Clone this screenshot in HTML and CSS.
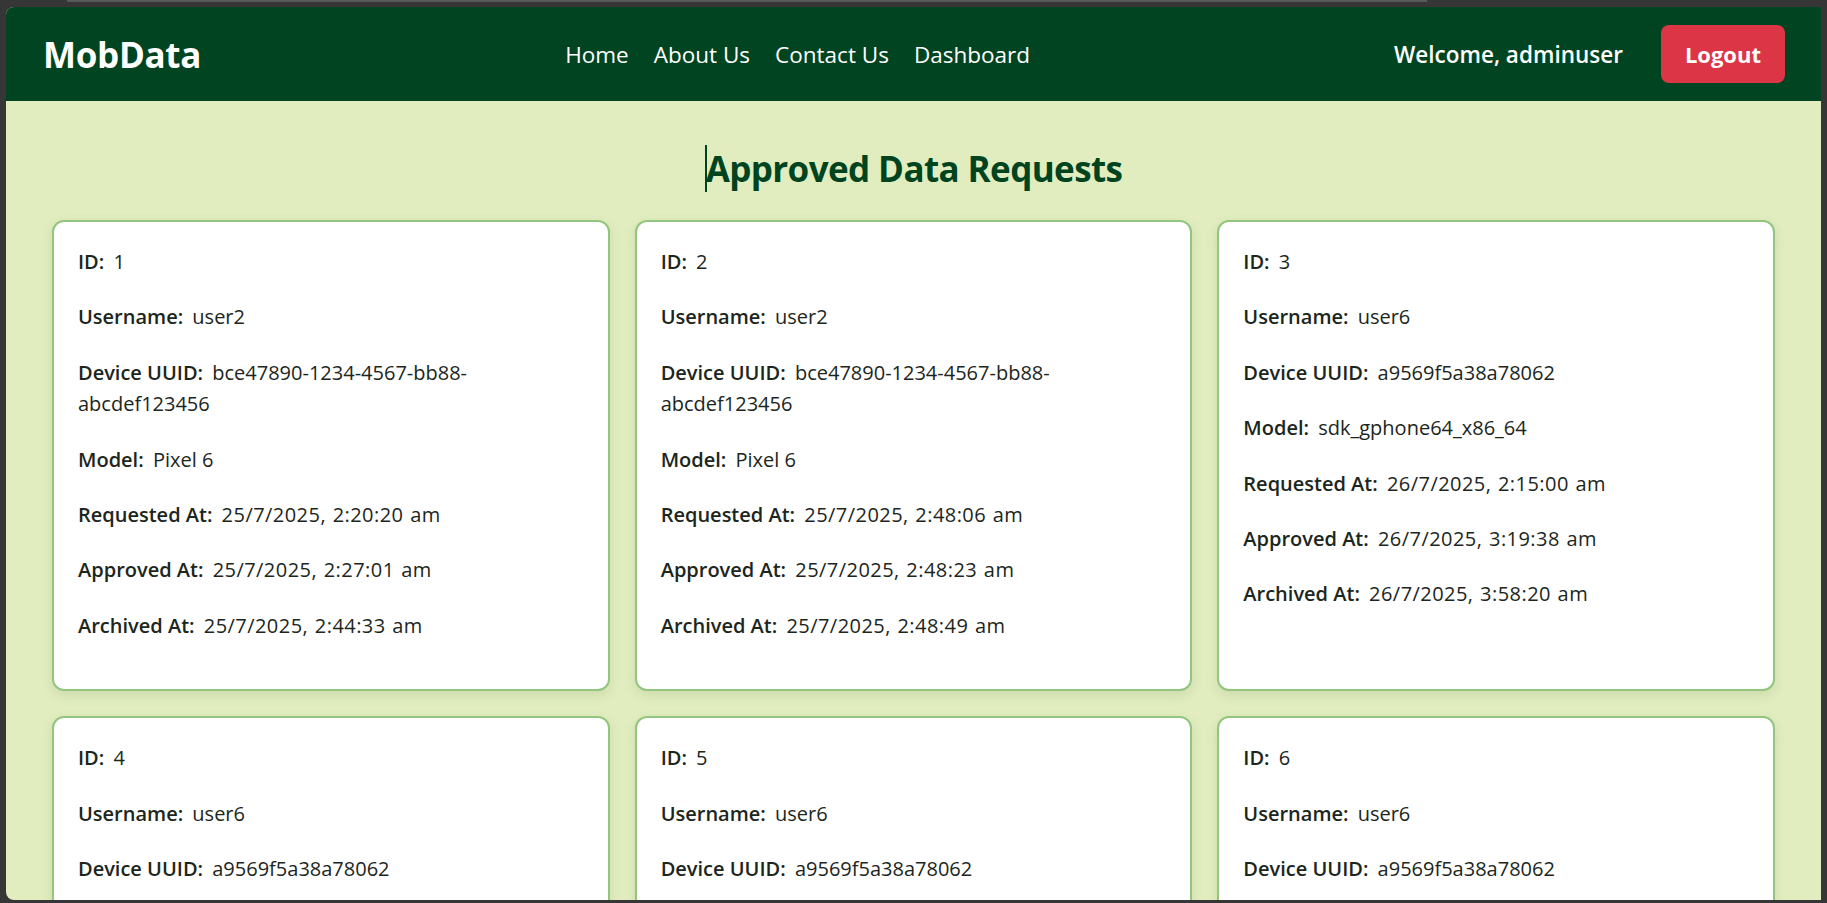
FILE: index.html
```html
<!DOCTYPE html>
<html lang="en">
<head>
<meta charset="utf-8">
<title>MobData - Approved Data Requests</title>
<link rel="stylesheet" href="styles.css">
</head>
<body>
<div class="chrome-line"></div>
<div class="window">
  <nav class="navbar">
    <div class="logo">MobData</div>
    <ul class="links">
      <li>Home</li>
      <li>About Us</li>
      <li>Contact Us</li>
      <li>Dashboard</li>
    </ul>
    <div class="user">
      <span class="welcome">Welcome, adminuser</span>
      <button class="logout">Logout</button>
    </div>
  </nav>
  <main class="content">
    <h1 class="title"><span class="caret"></span>Approved Data Requests</h1>
    <div class="grid">
      <div class="card">
        <p><strong>ID:</strong> <span class="val">1</span></p>
        <p><strong>Username:</strong> <span class="val">user2</span></p>
        <p><strong>Device UUID:</strong> <span class="val">bce47890-1234-4567-bb88-abcdef123456</span></p>
        <p><strong>Model:</strong> <span class="val">Pixel 6</span></p>
        <p><strong>Requested At:</strong> <span class="val date">25/7/2025, 2:20:20 am</span></p>
        <p><strong>Approved At:</strong> <span class="val date">25/7/2025, 2:27:01 am</span></p>
        <p><strong>Archived At:</strong> <span class="val date">25/7/2025, 2:44:33 am</span></p>
      </div>
      <div class="card">
        <p><strong>ID:</strong> <span class="val">2</span></p>
        <p><strong>Username:</strong> <span class="val">user2</span></p>
        <p><strong>Device UUID:</strong> <span class="val">bce47890-1234-4567-bb88-abcdef123456</span></p>
        <p><strong>Model:</strong> <span class="val">Pixel 6</span></p>
        <p><strong>Requested At:</strong> <span class="val date">25/7/2025, 2:48:06 am</span></p>
        <p><strong>Approved At:</strong> <span class="val date">25/7/2025, 2:48:23 am</span></p>
        <p><strong>Archived At:</strong> <span class="val date">25/7/2025, 2:48:49 am</span></p>
      </div>
      <div class="card">
        <p><strong>ID:</strong> <span class="val">3</span></p>
        <p><strong>Username:</strong> <span class="val">user6</span></p>
        <p><strong>Device UUID:</strong> <span class="val">a9569f5a38a78062</span></p>
        <p><strong>Model:</strong> <span class="val">sdk_gphone64_x86_64</span></p>
        <p><strong>Requested At:</strong> <span class="val date">26/7/2025, 2:15:00 am</span></p>
        <p><strong>Approved At:</strong> <span class="val date">26/7/2025, 3:19:38 am</span></p>
        <p><strong>Archived At:</strong> <span class="val date">26/7/2025, 3:58:20 am</span></p>
      </div>
      <div class="card">
        <p><strong>ID:</strong> <span class="val">4</span></p>
        <p><strong>Username:</strong> <span class="val">user6</span></p>
        <p><strong>Device UUID:</strong> <span class="val">a9569f5a38a78062</span></p>
        <p><strong>Model:</strong> <span class="val">sdk_gphone64_x86_64</span></p>
        <p><strong>Requested At:</strong> <span class="val date">26/7/2025, 4:02:11 am</span></p>
        <p><strong>Approved At:</strong> <span class="val date">26/7/2025, 4:05:40 am</span></p>
        <p><strong>Archived At:</strong> <span class="val date">26/7/2025, 4:30:02 am</span></p>
      </div>
      <div class="card">
        <p><strong>ID:</strong> <span class="val">5</span></p>
        <p><strong>Username:</strong> <span class="val">user6</span></p>
        <p><strong>Device UUID:</strong> <span class="val">a9569f5a38a78062</span></p>
        <p><strong>Model:</strong> <span class="val">sdk_gphone64_x86_64</span></p>
        <p><strong>Requested At:</strong> <span class="val date">26/7/2025, 4:40:18 am</span></p>
        <p><strong>Approved At:</strong> <span class="val date">26/7/2025, 4:41:05 am</span></p>
        <p><strong>Archived At:</strong> <span class="val date">26/7/2025, 4:52:47 am</span></p>
      </div>
      <div class="card">
        <p><strong>ID:</strong> <span class="val">6</span></p>
        <p><strong>Username:</strong> <span class="val">user6</span></p>
        <p><strong>Device UUID:</strong> <span class="val">a9569f5a38a78062</span></p>
        <p><strong>Model:</strong> <span class="val">sdk_gphone64_x86_64</span></p>
        <p><strong>Requested At:</strong> <span class="val date">26/7/2025, 5:10:33 am</span></p>
        <p><strong>Approved At:</strong> <span class="val date">26/7/2025, 5:12:09 am</span></p>
        <p><strong>Archived At:</strong> <span class="val date">26/7/2025, 5:20:56 am</span></p>
      </div>
    </div>
  </main>
</div>
</body>
</html>
```
FILE: styles.css
```css
html, body {
  margin: 0;
  padding: 0;
  height: 100%;
}

body {
  background: #363636;
  overflow: hidden;
  font-family: "Open Sans", "Noto Sans", "Liberation Sans", sans-serif;
  position: relative;
}

.chrome-line {
  position: absolute;
  top: 0;
  left: 67px;
  width: 1360px;
  height: 2px;
  background: #595959;
}

.window {
  margin: 7px 6px 0 6px;
  height: 893px;
  border-radius: 8px 0 0 8px;
  overflow: hidden;
  background: #e1edbf;
}

.navbar {
  height: 94px;
  box-sizing: border-box;
  background: #014421;
  display: flex;
  align-items: center;
  justify-content: space-between;
  padding: 0 36px 0 37px;
  color: #ffffff;
}

.logo {
  font-size: 35px;
  font-weight: 700;
  letter-spacing: -0.3px;
}

.links {
  list-style: none;
  margin: 0;
  padding: 0;
  display: flex;
  gap: 25px;
  font-size: 22.5px;
}

.user {
  display: flex;
  align-items: center;
  gap: 38px;
}

.welcome {
  font-size: 22.5px;
  font-weight: 600;
}

.logout {
  font-family: inherit;
  font-size: 22px;
  font-weight: 700;
  color: #ffffff;
  background: #dc3545;
  border: none;
  border-radius: 8px;
  height: 58px;
  padding: 0 24px;
}

.content {
  padding: 44px 46px 0 46px;
}

.title {
  margin: 0 0 28px 0;
  text-align: center;
  font-size: 35px;
  line-height: 47px;
  font-weight: 700;
  letter-spacing: -0.6px;
  color: #00441f;
}

.caret {
  display: inline-block;
  width: 2px;
  height: 47px;
  background: #00441f;
  vertical-align: top;
  margin-right: -1px;
}

.grid {
  display: grid;
  grid-template-columns: repeat(3, 1fr);
  gap: 25px;
}

.card {
  background: #ffffff;
  border: 2px solid #92c67f;
  border-radius: 12px;
  padding: 24px;
  box-shadow: 0 4px 12px rgba(60, 90, 30, 0.12);
}

.card p {
  margin: 0 0 24px 0;
  font-size: 20px;
  line-height: 31.4px;
  color: #1c261c;
}

.card strong {
  font-weight: 600;
  margin-right: 4px;
}

.card .date {
  word-spacing: 1px;
  letter-spacing: 0.45px;
}
```
